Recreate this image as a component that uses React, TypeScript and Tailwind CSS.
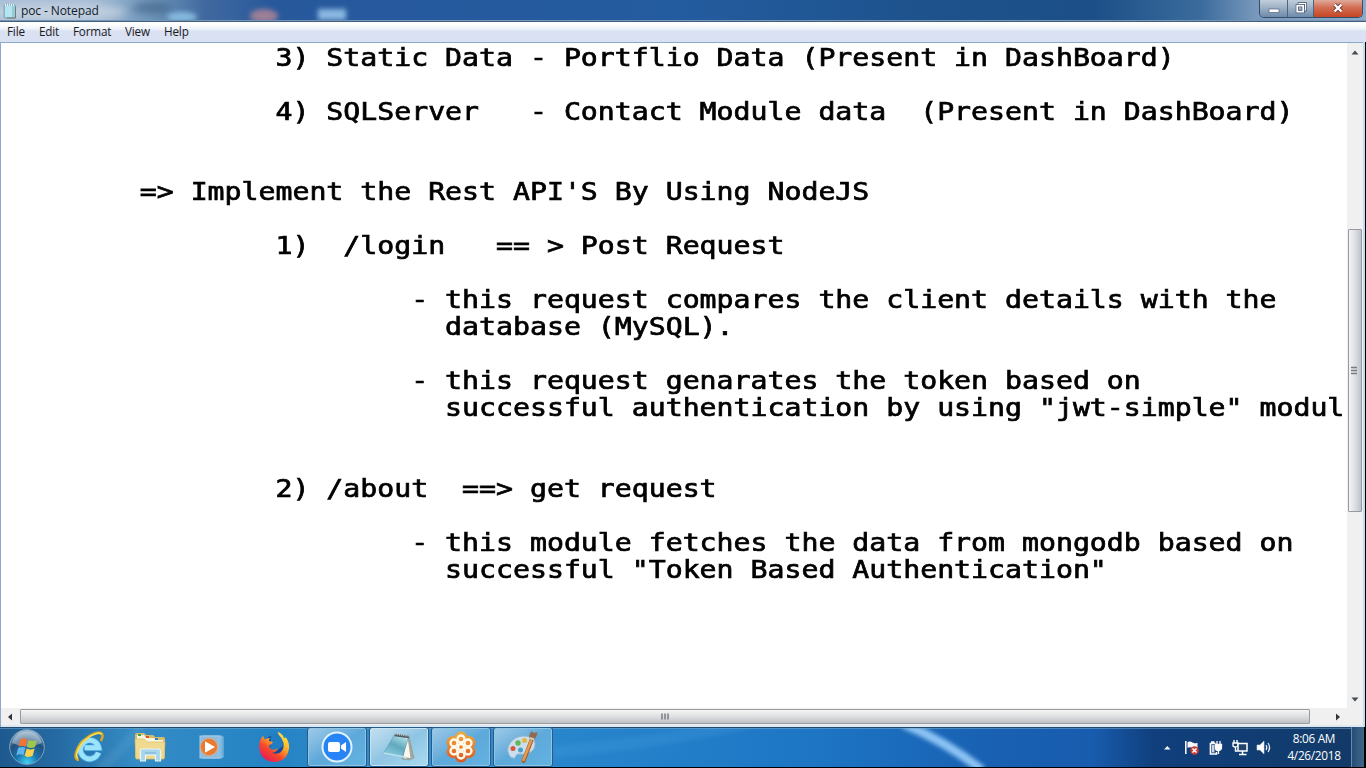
import React from "react";

const lines = [
  "                3) Static Data - Portflio Data (Present in DashBoard)",
  "",
  "                4) SQLServer   - Contact Module data  (Present in DashBoard)",
  "",
  "",
  "        => Implement the Rest API'S By Using NodeJS",
  "",
  "                1)  /login   == > Post Request",
  "",
  "                        - this request compares the client details with the",
  "                          database (MySQL).",
  "",
  "                        - this request genarates the token based on",
  "                          successful authentication by using \"jwt-simple\" modul",
  "",
  "",
  "                2) /about  ==> get request",
  "",
  "                        - this module fetches the data from mongodb based on",
  "                          successful \"Token Based Authentication\"",
];

function NotepadSmall() {
  return (
    <svg width="14" height="16" viewBox="0 0 14 16">
      <rect x="1" y="2" width="11.5" height="13" rx="1" fill="#8fcfdf" stroke="#6d9cab" strokeWidth=".8" />
      <rect x="2" y="3" width="7" height="11" fill="#b5e4ee" />
      <path d="M2 2h10" stroke="#e8f2f4" strokeWidth="2" strokeDasharray="1 1" />
      <path d="M12.5 4v11H4" stroke="#7a7a68" fill="none" />
    </svg>
  );
}

function TitleBar() {
  return (
    <header className="relative flex h-[21px] shrink-0 items-start overflow-hidden">
      <svg className="absolute inset-0" width="1366" height="21">
        <defs>
          <linearGradient id="tb" x1="0" x2="1366" y1="0" y2="0" gradientUnits="userSpaceOnUse">
            <stop offset="0" stopColor="#a9bdd5" />
            <stop offset=".07" stopColor="#a2b9d3" />
            <stop offset=".11" stopColor="#6f97ba" />
            <stop offset=".15" stopColor="#41699f" />
            <stop offset=".2" stopColor="#27589c" />
            <stop offset=".5" stopColor="#235c9f" />
            <stop offset=".68" stopColor="#1d528c" />
            <stop offset=".8" stopColor="#1c4f87" />
            <stop offset=".88" stopColor="#3c6c9e" />
            <stop offset=".92" stopColor="#7899bb" />
            <stop offset="1" stopColor="#8babc9" />
          </linearGradient>
          <filter id="soft" x="-50%" y="-100%" width="200%" height="300%"><feGaussianBlur stdDeviation="4" /></filter>
          <filter id="soft2" x="-50%" y="-100%" width="200%" height="300%"><feGaussianBlur stdDeviation="2.5" /></filter>
        </defs>
        <rect width="1366" height="21" fill="url(#tb)" />
        <ellipse cx="58" cy="12" rx="68" ry="9" fill="#c9d5e3" filter="url(#soft)" opacity=".8" />
        <ellipse cx="152" cy="8" rx="20" ry="5" fill="#3c5d82" filter="url(#soft)" opacity=".7" />
        <ellipse cx="182" cy="17" rx="15" ry="5" fill="#85b9df" filter="url(#soft2)" />
        <ellipse cx="264" cy="16" rx="14" ry="7" fill="#9b7f96" filter="url(#soft2)" />
        <rect x="318" y="9" width="28" height="11" fill="#89b8e1" filter="url(#soft2)" />
        <path d="M0 20.5h1366" stroke="#7795b6" />
      </svg>
      <div className="relative flex h-[21px] flex-1 items-center pl-[3px]">
        <NotepadSmall />
        <span className="ml-[4px] whitespace-nowrap text-[12px] leading-[21px] tracking-[-0.1px] text-[#111c28]">poc - Notepad</span>
      </div>
      <div className="relative mr-[3px] flex h-[18px] w-[104px] overflow-hidden rounded-b-[5px] border border-t-0 border-[#344e6f]">
        <div className="flex w-[28px] justify-center border-r border-[#4d6582] bg-linear-to-b from-[#c2cedb] from-0% via-[#9eb1c5] via-45% to-[#6c8bab]">
          <svg width="14" height="17"><rect x="2" y="9" width="10" height="3.5" fill="#fff" stroke="#52647b" strokeWidth=".7" /></svg>
        </div>
        <div className="flex w-[26px] justify-center border-r border-[#4d6582] bg-linear-to-b from-[#c2cedb] from-0% via-[#9eb1c5] via-45% to-[#6c8bab]">
          <svg width="14" height="17" fill="none"><path d="M5 5V3.5h6.5V10H10" stroke="#41516a" strokeWidth="2.6" /><path d="M5 5V3.5h6.5V10H10" stroke="#fff" strokeWidth="1.2" /><rect x="3.2" y="5.7" width="6" height="6" stroke="#41516a" strokeWidth="3" /><rect x="3.2" y="5.7" width="6" height="6" stroke="#fff" strokeWidth="1.7" /></svg>
        </div>
        <div className="flex flex-1 justify-center bg-linear-to-b from-[#dfaa9b] from-0% via-[#d26d52] via-45% to-[#c54521]">
          <svg width="14" height="17"><path d="M3.5 4.5l7 7m0-7l-7 7" stroke="#71392e" strokeWidth="4" /><path d="M3.5 4.5l7 7m0-7l-7 7" stroke="#fff" strokeWidth="2.4" /></svg>
        </div>
      </div>
    </header>
  );
}

function MenuBar() {
  return (
    <nav className="flex h-[21px] shrink-0 border-t border-[#435f80] bg-linear-to-b from-[#ffffff] from-10% via-[#eef3fa] via-35% to-[#d9e1f2] to-45% pl-[7px] text-[11.7px] leading-[19px] tracking-[-0.16px] text-[#1b1b1f]">
      <span className="w-[32px]">File</span>
      <span className="w-[34px]">Edit</span>
      <span className="w-[52px]">Format</span>
      <span className="w-[39px]">View</span>
      <span>Help</span>
    </nav>
  );
}

function StartOrb() {
  return (
    <svg width="38" height="38" viewBox="0 0 38 38">
      <defs>
        <radialGradient id="orb" cx=".5" cy=".95" r=".9">
          <stop offset="0" stopColor="#3fd3f5" />
          <stop offset=".35" stopColor="#1a75ac" />
          <stop offset=".7" stopColor="#22507c" />
          <stop offset="1" stopColor="#96b3c9" />
        </radialGradient>
      </defs>
      <circle cx="19" cy="19" r="17.3" fill="url(#orb)" stroke="#7ea4c2" strokeWidth="1" />
      <path d="M4 15a15.5 15.5 0 0 1 30 0q-15 7-30 0" fill="#dbe8f1" opacity=".42" />
      <path d="M12.2 11.6q4-2.5 7.2-.3l-1.7 7.2q-3.5-1.8-7.2.2z" fill="#f07434" />
      <path d="M20.6 12q4.2 2.2 8.3 0l-1.9 7q-4 2-8 .1z" fill="#9fc84a" />
      <path d="M10.1 20q3.8-2 7.3-.2l-1.9 7.5q-3.3-2.2-7.2.2z" fill="#5fb5ec" />
      <path d="M18.6 20.4q4 2 8 0l-1.9 7.4q-4 2.2-8-.1z" fill="#fcd04b" />
    </svg>
  );
}

function ExplorerE() {
  return (
    <svg width="34" height="34" viewBox="0 0 34 34" fill="none">
      <path d="M26.5 22.5A9.3 9.3 0 1 1 26.8 17.8H12.500" stroke="#3c9fdb" strokeWidth="6.600" />
      <path d="M26.500 22.500A9.300 9.300 0 1 1 26.800 17.800H12.500" stroke="#9be2fb" strokeWidth="4.900" />
      <path d="M7 30C.5 30 3.5 17 13.5 9 22 2 30 .5 30.500 5.500c.2 2-.7 4-1.700 5.500" stroke="#d4a61f" strokeWidth="2.7" />
      <path d="M6 28.500C2.500 26 6 16 14 9.300 21 3.500 28 1.800 29.700 4.500" stroke="#f9dd58" strokeWidth="1.7" />
    </svg>
  );
}

function Folder() {
  return (
    <svg width="34" height="32" viewBox="0 0 34 32">
      <path d="M2 4q0-2 2-2h7l2 2h7l2 2h8q2 0 2 2v19H2z" fill="#d7bd67" />
      <path d="M4 4h7l2 3h8l2 2h7v5H4z" fill="#f9f5df" />
      <path d="M5 3h3v2H5z" fill="#3e9c55" /><path d="M13 5h3v2h-3z" fill="#d85133" /><path d="M22 7h3v2h-3z" fill="#3680b8" />
      <path d="M2 8h9l3 3h18l-1 17H3z" fill="#f0da90" stroke="#d8bc64" strokeWidth=".7" />
      <path d="M7.500 30V20q0-2 2-2h16q2 0 2 2v10h-5v-6H12.500v6z" fill="#a7d5ec" stroke="#e4f5fb" strokeWidth="1.2" />
      <path d="M12 22h11" stroke="#74afd1" />
    </svg>
  );
}

function MediaPlayer() {
  return (
    <svg width="28" height="26" viewBox="0 0 28 26">
      <rect x="7" y="3" width="17" height="20" fill="#4f9cd2" stroke="#8dc2e5" />
      <rect x="4" y="2" width="18" height="22" fill="#6dadd9" stroke="#9fcdea" />
      <rect x="1" y="2" width="19" height="22" fill="#8fbcdd" stroke="#a2cae5" />
      <circle cx="10" cy="13" r="8.500" fill="#e8792f" stroke="#f5a467" strokeWidth=".8" />
      <path d="M6 7.300l10 5.700-10 5.700z" fill="#fff" />
    </svg>
  );
}

function Firefox() {
  return (
    <svg width="32" height="32" viewBox="0 0 32 32">
      <defs>
        <linearGradient id="ff" x1=".9" y1="0" x2=".2" y2="1">
          <stop offset="0" stopColor="#fff04b" /><stop offset=".38" stopColor="#ffb128" /><stop offset=".66" stopColor="#f7472c" /><stop offset="1" stopColor="#e31560" />
        </linearGradient>
      </defs>
      <circle cx="16" cy="15.500" r="11" fill="#164b9e" />
      <path d="M13 3q7-3 11 3l1 9-7 5-6-2z" fill="#207dc2" />
      <path d="M2.500 8.500L5 4.500l1.500 4Q9 6.500 12 7q-1.500 1.700-1 3l4 1q-.3 2-3.700 3.200-.5 4.300 4.200 4.600 2.500 0 4.500-1.500-1.500 4.300-6 4.500 8 3 11-4 1.600-4.500-.7-8.500-1-3-3.300-5L19.500 1q5 1.300 6.500 6l2-.5q4 6 2.800 12Q28.500 30.500 16.500 31 4 30.500 1.500 19 .5 13 2.500 8.500z" fill="url(#ff)" />
    </svg>
  );
}

function Zoom() {
  return (
    <svg width="34" height="34" viewBox="0 0 34 34">
      <circle cx="17" cy="17" r="15.500" fill="#e2f3fb" /><circle cx="17" cy="17" r="13.500" fill="#2684f7" />
      <rect x="8" y="12" width="12" height="10" rx="2" fill="#fff" /><path d="M21 15.500l5-3.500v10l-5-3.500z" fill="#fff" />
    </svg>
  );
}

function NotepadBig() {
  return (
    <svg width="36" height="34" viewBox="0 0 36 34">
      <defs><linearGradient id="pad" x1=".7" y1="0" x2=".2" y2="1"><stop offset="0" stopColor="#b9e6ec" /><stop offset=".5" stopColor="#60aabd" /><stop offset="1" stopColor="#8dcde2" /></linearGradient></defs>
      <path d="M27.500 5l5.500 23-5 2-7-1z" fill="#a5a69c" stroke="#8f9086" strokeWidth=".6" />
      <path d="M26.500 7l3 21-7-1z" fill="#f8f8f1" />
      <path d="M14 4L28 6l-6.500 20.500L3 22.500z" fill="url(#pad)" stroke="#589bad" strokeWidth=".6" />
      <path d="M13.500 5l14.500 2" stroke="#505c61" strokeWidth="2.500" /><path d="M13.500 4L28 6" stroke="#bccaca" strokeWidth="1.500" strokeDasharray="1.200 1" />
      <path d="M3 23l18.500 3.500 4 2" stroke="#b7e4f0" fill="none" strokeWidth="1.500" />
    </svg>
  );
}

function Flower() {
  return (
    <svg width="34" height="34" viewBox="0 0 34 34">
      <defs><linearGradient id="flower" x1="0" y1="2" x2="0" y2="32" gradientUnits="userSpaceOnUse"><stop offset="0" stopColor="#f0ad3b" /><stop offset="1" stopColor="#dc5720" /></linearGradient></defs>
      <g fill="url(#flower)"><circle cx="17" cy="8" r="6.500" /><circle cx="25" cy="12.500" r="6.500" /><circle cx="25" cy="21.500" r="6.500" /><circle cx="17" cy="26" r="6.500" /><circle cx="9" cy="21.500" r="6.500" /><circle cx="9" cy="12.500" r="6.500" /><circle cx="17" cy="17" r="12" /></g>
      <g fill="url(#flower)" stroke="#fff9ec" strokeWidth="2.300"><circle cx="17" cy="9" r="3.500" /><circle cx="24" cy="13" r="3.500" /><circle cx="24" cy="21" r="3.500" /><circle cx="17" cy="25" r="3.500" /><circle cx="10" cy="21" r="3.500" /><circle cx="10" cy="13" r="3.500" /><circle cx="17" cy="17" r="3" /></g>
    </svg>
  );
}

function Paint() {
  return (
    <svg width="36" height="34" viewBox="0 0 36 34">
      <path d="M4 25Q1 19 5 13 10 6 19 6q10 0 11 7 .5 7-6 10-7 2-11 1-2 .3-3 4-4 1-6-3z" fill="#c9dfed" stroke="#92b4ce" />
      <circle cx="8" cy="18.500" r="2.500" fill="#dc563b" /><circle cx="13" cy="13" r="2.700" fill="#66b35d" /><circle cx="19.500" cy="10.500" r="2.500" fill="#e2b83c" /><circle cx="15.500" cy="20" r="2.500" fill="#4a9ecb" />
      <path d="M27 9l-8.500 22" stroke="#a65b21" strokeWidth="4" strokeLinecap="round" /><path d="M26 11l-7.500 19" stroke="#e59b52" strokeWidth="2.500" strokeLinecap="round" />
      <path d="M24.500 8q-1-3 2-7l2 2 4-1q-.5 6-4.500 8z" fill="#916a4f" /><path d="M25 8l4 1.500" stroke="#d8cbb9" strokeWidth="2" />
    </svg>
  );
}

function TaskButton({ children, active = false }: { children: React.ReactNode; active?: boolean }) {
  return (
    <div className={active
      ? "mr-[2px] flex h-[40px] w-[60px] items-center justify-center rounded-[3px] border border-[#245c8d] bg-linear-to-br from-[#c5e0ef] via-[#8fc5e4] to-[#a8dcf1] shadow-[inset_0_0_0_1px_#c7e2f2]"
      : "mr-[2px] flex h-[40px] w-[60px] items-center justify-center rounded-[3px] border border-[#245c8d] bg-linear-to-br from-[#a0cae7] via-[#5da9da] to-[#63b3e1] shadow-[inset_0_0_0_1px_#91c5e6]"}>
      {children}
    </div>
  );
}

function TrayIcons() {
  return (
    <svg width="112" height="22" viewBox="1160 736 112 22" className="shrink-0">
      <path d="M1164 749.500l3.300-3.500 3.200 3.500z" fill="#f2f7fb" />
      <path d="M1185.800 741v13" stroke="#fff" strokeWidth="1.500" />
      <path d="M1187.500 742q3-1 5 .5t5 .2v6q-3 .8-5-.7t-5-.2z" fill="#f5f7fa" />
      <circle cx="1194.500" cy="750.500" r="4.300" fill="#c93d38" /><path d="M1192.500 748.500l4 4m0-4l-4 4" stroke="#fff" strokeWidth="1.500" />
      <path d="M1215.500 743.500h-5v10.500h6v-2M1211 742h3.500" fill="none" stroke="#fff" strokeWidth="1.700" />
      <path d="M1212 745h2.500v7.500h-2.500z" fill="#c8d4e1" />
      <path d="M1215.500 744.500h6v3q0 2.500-3 3t-3-3zM1217 741v4m3-4v4m-1.500 5v4" fill="#fff" stroke="#fff" strokeWidth="1.300" />
      <path d="M1234 740v3m3-3v3m-4 0h5v3q-3 2-5 0zm2.500 3.500V751h2" fill="none" stroke="#fff" strokeWidth="1.400" />
      <rect x="1238" y="743.500" width="9" height="7.500" fill="#21436c" stroke="#fff" strokeWidth="1.500" />
      <path d="M1242.500 751v3m-3.500 .5h7.500" stroke="#fff" strokeWidth="1.500" />
      <path d="M1257 745h3l4-4v13l-4-4h-3z" fill="#fff" stroke="#ccd7e5" strokeWidth=".6" />
      <path d="M1266 745q1.700 2.500 0 5m2-7q3.200 4.500 0 9" fill="none" stroke="#e6eef8" strokeWidth="1.200" />
    </svg>
  );
}

function Taskbar() {
  return (
    <footer className="relative flex h-[40px] shrink-0 overflow-hidden">
      <svg className="absolute inset-0" width="1366" height="40">
        <defs>
          <linearGradient id="task" x1="0" x2="1366" y1="0" y2="0" gradientUnits="userSpaceOnUse">
            <stop offset="0" stopColor="#1d598e" /><stop offset=".045" stopColor="#266ca4" /><stop offset=".1" stopColor="#358cc5" /><stop offset=".2" stopColor="#2483c5" /><stop offset=".3" stopColor="#398fc9" /><stop offset=".42" stopColor="#2785cc" /><stop offset=".6" stopColor="#1d75c4" /><stop offset=".72" stopColor="#1961b3" /><stop offset=".8" stopColor="#185cae" /><stop offset=".845" stopColor="#103f7d" /><stop offset="1" stopColor="#123a67" />
          </linearGradient>
          <filter id="glow" x="-20%" y="-20%" width="140%" height="140%"><feGaussianBlur stdDeviation="2" /></filter>
        </defs>
        <rect width="1366" height="40" fill="url(#task)" />
        <path d="M100 42Q125 20 140 0" stroke="#61a4cf" strokeWidth="10" opacity=".25" fill="none" filter="url(#glow)" />
        <path d="M552 25Q665 15 755 -6" stroke="#4aa0df" strokeWidth="12" opacity=".25" fill="none" filter="url(#glow)" />
        <path d="M904-3Q945 14 982 43" stroke="#8bc3f4" strokeWidth="9" fill="none" filter="url(#glow)" />
        <path d="M0 .5h1366" stroke="#24496b" /><path d="M0 1.500h1366" stroke="#76a7cc" opacity=".55" />
      </svg>
      <div className="relative flex h-[40px] w-[307px] items-center pl-[8px]">
        <StartOrb />
        <div className="ml-[26px] flex"><ExplorerE /></div>
        <div className="ml-[27px] flex"><Folder /></div>
        <div className="ml-[32px] flex"><MediaPlayer /></div>
        <div className="ml-[31px] flex"><Firefox /></div>
      </div>
      <div className="relative flex flex-1">
        <TaskButton><Zoom /></TaskButton>
        <TaskButton active><NotepadBig /></TaskButton>
        <TaskButton><Flower /></TaskButton>
        <TaskButton><Paint /></TaskButton>
      </div>
      <div className="relative flex items-center">
        <TrayIcons />
        <div className="flex w-[79px] flex-col items-center pl-[5px] text-[11.8px] leading-[17px] tracking-[-0.3px] text-white">
          <span>8:06 AM</span><span>4/26/2018</span>
        </div>
        <div className="h-[40px] w-[13px] border-l border-[#6888a9] bg-linear-to-r from-[#274e77] to-[#406789]" />
        <div className="h-[40px] w-[2px] bg-black" />
      </div>
    </footer>
  );
}

function VerticalScroll() {
  return (
    <div className="flex h-full w-[16px] shrink-0 flex-col items-center bg-[#f0f0f0]">
      <svg width="16" height="186"><path d="M4.500 11.500L8 7.500l3.500 4z" fill="#444c57" /></svg>
      <div className="flex h-[283px] w-[14px] items-center justify-center rounded-[1px] border border-[#9699a0] bg-linear-to-r from-[#f4f4f4] via-[#dddfe2] to-[#bfc3ca]">
        <svg width="8" height="9"><path d="M0 1.500h6M0 4.500h6M0 7.500h6" stroke="#777b80" strokeWidth="1.500" /></svg>
      </div>
      <svg className="mt-auto" width="16" height="16"><path d="M4.500 5.500l3.500 4 3.500-4z" fill="#444c57" /></svg>
    </div>
  );
}

export default function App() {
  return (
    <div className="flex h-[768px] w-[1366px] flex-col overflow-hidden bg-black font-['Open_Sans','Noto_Sans',sans-serif]">
      <TitleBar />
      <MenuBar />
      <div className="flex h-[685px] shrink-0">
        <main className="flex flex-1 flex-col border-l border-t border-[#8ba9cc] bg-white">
          <div className="flex h-[665px]">
            <div className="min-w-0 flex-1 overflow-hidden pl-[3px]">
              <div className="w-[1144px] origin-top-left scale-x-[1.1742] pt-[1.8px] font-['DejaVu_Sans_Mono','Liberation_Mono',monospace] text-[24px] leading-[26.95px] text-black [-webkit-text-stroke:0.7px_#000]">
                {lines.map((line, i) => <div key={i} className="h-[26.95px] whitespace-pre">{line}</div>)}
              </div>
            </div>
            <VerticalScroll />
          </div>
          <div className="flex h-[17px] items-center bg-[#f0f0f0]">
            <svg width="19" height="16"><path d="M11 4.500L7 8l4 3.500z" fill="#30343a" /></svg>
            <div className="flex h-[15px] w-[1290px] items-center justify-center rounded-[1px] border border-[#9a9ca0] bg-linear-to-b from-[#f5f5f5] via-[#dedfe1] to-[#bfc2c6]">
              <svg width="9" height="8"><path d="M1 .5v6M4 .5v6M7 .5v6" stroke="#777b80" strokeWidth="1.500" /></svg>
            </div>
            <svg className="ml-[19px]" width="16" height="16"><path d="M7 4.500l4 3.500-4 3.500z" fill="#30343a" /></svg>
          </div>
          <div className="h-[2px] bg-[#dce9f4]" />
        </main>
        <div className="w-[2px] bg-[#c3dcf0]" />
        <div className="w-px bg-black" />
      </div>
      <Taskbar />
      <div className="h-px bg-black" />
    </div>
  );
}
